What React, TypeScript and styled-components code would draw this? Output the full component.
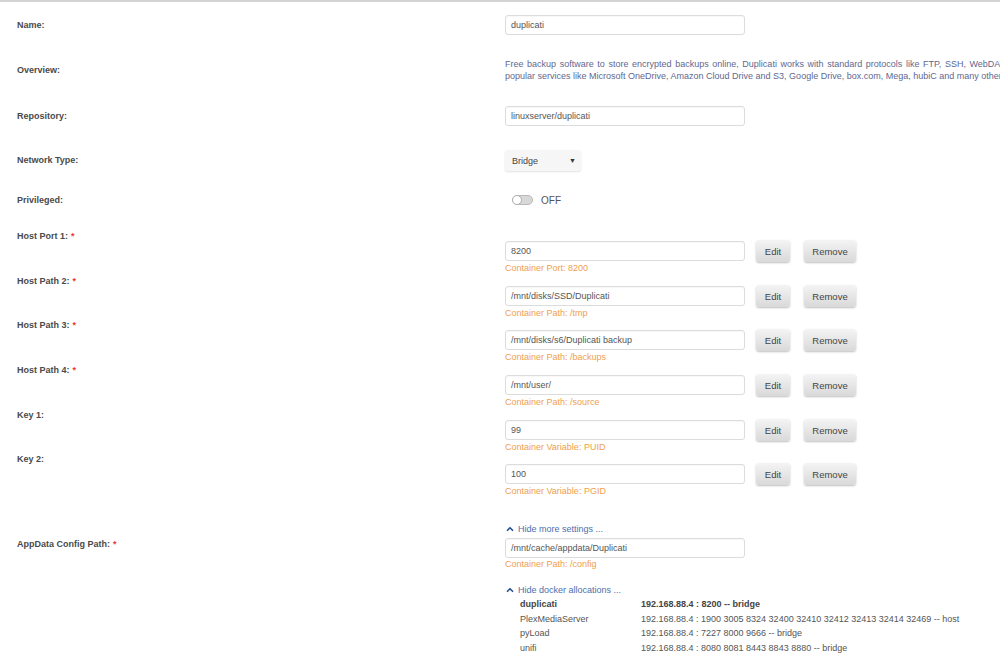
import { Fragment } from "react";
import styled, { createGlobalStyle } from "styled-components";
import { ChevronUp } from "lucide-react";

const GlobalStyle = createGlobalStyle`
  html, body {
    margin: 0;
    padding: 0;
    background: #fff;
    overflow: hidden;
  }
  body {
    font-family: "Liberation Sans", Arial, sans-serif;
  }
`

const Page = styled.div`
  width: 1000px;
  border-top: 2px solid #d3d3d3;
  padding: 13px 0 0 17px;
  box-sizing: border-box;
  overflow: hidden;
`

const Row = styled.div<{ $h: number }>`
  display: grid;
  grid-template-columns: 488px 1fr;
  height: ${p => p.$h}px;
`

const Label = styled.div<{ $lh?: number; $pt?: number }>`
  font-size: 9px;
  font-weight: bold;
  color: #4a4a4a;
  line-height: ${p => p.$lh || 14}px;
  padding-top: ${p => p.$pt || 0}px;
  white-space: nowrap;
`

const Req = styled.span`
  color: #e33;
  margin-left: 3px;
`

const Value = styled.div<{ $pt?: number }>`
  display: flex;
  flex-direction: column;
  align-items: flex-start;
  padding-top: ${p => p.$pt || 0}px;
  min-width: 0;
`

const Input = styled.div`
  width: 240px;
  height: 20px;
  box-sizing: border-box;
  border: 1px solid #dcdcdc;
  border-radius: 3px;
  background: #fff;
  box-shadow: inset 0 1px 1px rgba(0, 0, 0, 0.03);
  padding-left: 5px;
  font-size: 9px;
  line-height: 18px;
  color: #555;
  white-space: nowrap;
`

const Desc = styled.div`
  font-size: 9px;
  line-height: 12px;
  color: #5f6890;
  white-space: nowrap;
`

const DescLine = styled.div<{ $w?: number }>`
  width: ${p => (p.$w ? `${p.$w}px` : "auto")};
  text-align: ${p => (p.$w ? "justify" : "left")};
  text-align-last: ${p => (p.$w ? "justify" : "left")};
`

const Select = styled.div`
  width: 76px;
  height: 21px;
  box-sizing: border-box;
  display: flex;
  align-items: center;
  justify-content: space-between;
  padding: 0 5px 0 7px;
  background: #f6f6f6;
  border-radius: 3px;
  box-shadow: 0 1px 2px rgba(0, 0, 0, 0.12);
  font-size: 9px;
  color: #444;
`

const Caret = styled.span`
  font-size: 7px;
  color: #333;
`

const SwitchWrap = styled.div`
  display: flex;
  align-items: center;
  height: 20px;
  padding-left: 7px;
  gap: 8px;
  font-size: 10px;
  color: #555;
`

const Track = styled.div`
  position: relative;
  width: 21px;
  height: 10px;
  box-sizing: border-box;
  border-radius: 5px;
  background: #d8d8d8;
  border: 1px solid #b9b9b9;
`

const Knob = styled.div`
  position: absolute;
  left: -1px;
  top: -1px;
  width: 10px;
  height: 10px;
  box-sizing: border-box;
  border-radius: 50%;
  background: #fff;
  border: 1px solid #b0b0b0;
`

const Line = styled.div`
  display: flex;
  align-items: center;
  height: 22px;
`

const Button = styled.div<{ $w: number; $ml: number }>`
  width: ${p => p.$w}px;
  height: 22px;
  margin-left: ${p => p.$ml}px;
  box-sizing: border-box;
  display: flex;
  align-items: center;
  justify-content: center;
  border-radius: 3px;
  background: linear-gradient(#f4f4f4, #d9d9d9);
  box-shadow: 0 1px 2px rgba(0, 0, 0, 0.25);
  font-size: 9.5px;
  color: #444;
`

const Note = styled.div`
  font-size: 9px;
  line-height: 12px;
  color: #f0a04e;
  white-space: nowrap;
`

const Toggle = styled.div`
  display: flex;
  align-items: center;
  gap: 3px;
  font-size: 9px;
  line-height: 14px;
  color: #4a70ad;
  white-space: nowrap;
`

const Alloc = styled.div`
  display: grid;
  grid-template-columns: 121px auto;
  padding-left: 15px;
  font-size: 9px;
  line-height: 14.5px;
  color: #555;
  white-space: nowrap;
`

const Cell = styled.div<{ $bold?: boolean }>`
  font-weight: ${p => (p.$bold ? "bold" : "normal")};
  color: ${p => (p.$bold ? "#444" : "#555")};
`

type TMapping = {
  label: string;
  value: string;
  note: string;
  h: number;
}

const mappings: TMapping[] = [
  { label: "Host Port 1:", value: "8200", note: "Container Port: 8200", h: 45 },
  { label: "Host Path 2:", value: "/mnt/disks/SSD/Duplicati", note: "Container Path: /tmp", h: 44 },
  { label: "Host Path 3:", value: "/mnt/disks/s6/Duplicati backup", note: "Container Path: /backups", h: 45 },
  { label: "Host Path 4:", value: "/mnt/user/", note: "Container Path: /source", h: 45 },
  { label: "Key 1:", value: "99", note: "Container Variable: PUID", h: 44 },
  { label: "Key 2:", value: "100", note: "Container Variable: PGID", h: 70 },
]

const allocations = [
  { name: "duplicati", ports: "192.168.88.4 : 8200 -- bridge", bold: true },
  { name: "PlexMediaServer", ports: "192.168.88.4 : 1900 3005 8324 32400 32410 32412 32413 32414 32469 -- host" },
  { name: "pyLoad", ports: "192.168.88.4 : 7227 8000 9666 -- bridge" },
  { name: "unifi", ports: "192.168.88.4 : 8080 8081 8443 8843 8880 -- bridge" },
]

const App = () => {
  return (
    <>
      <GlobalStyle />
      <Page>
        <Row $h={43}>
          <Label $lh={20}>Name:</Label>
          <Value><Input>duplicati</Input></Value>
        </Row>
        <Row $h={48}>
          <Label $pt={5}>Overview:</Label>
          <Value>
            <Desc>
              <DescLine $w={546}>Free backup software to store encrypted backups online, Duplicati works with standard protocols like FTP, SSH, WebDAV as well as</DescLine>
              <DescLine>popular services like Microsoft OneDrive, Amazon Cloud Drive and S3, Google Drive, box.com, Mega, hubiC and many others.</DescLine>
            </Desc>
          </Value>
        </Row>
        <Row $h={44}>
          <Label $lh={20}>Repository:</Label>
          <Value><Input>linuxserver/duplicati</Input></Value>
        </Row>
        <Row $h={40}>
          <Label $lh={21}>Network Type:</Label>
          <Value>
            <Select>Bridge<Caret>▼</Caret></Select>
          </Value>
        </Row>
        <Row $h={39}>
          <Label $lh={21}>Privileged:</Label>
          <Value>
            <SwitchWrap>
              <Track><Knob /></Track>
              OFF
            </SwitchWrap>
          </Value>
        </Row>
        { mappings.map((m) => (
          <Row $h={m.h} key={m.label}>
            <Label>{m.label}{m.label.startsWith("Host") && <Req>*</Req>}</Label>
            <Value $pt={11}>
              <Line>
                <Input>{m.value}</Input>
                <Button $w={34} $ml={11}>Edit</Button>
                <Button $w={52} $ml={14}>Remove</Button>
              </Line>
              <Note>{m.note}</Note>
            </Value>
          </Row>
        )) }
        <Row $h={15}>
          <span />
          <Value>
            <Toggle><ChevronUp size={10} strokeWidth={4} color="#24528f" />Hide more settings ...</Toggle>
          </Value>
        </Row>
        <Row $h={46}>
          <Label>AppData Config Path:<Req>*</Req></Label>
          <Value $pt={1}>
            <Input>/mnt/cache/appdata/Duplicati</Input>
            <Note>Container Path: /config</Note>
          </Value>
        </Row>
        <Row $h={14}>
          <span />
          <Value>
            <Toggle><ChevronUp size={10} strokeWidth={4} color="#24528f" />Hide docker allocations ...</Toggle>
          </Value>
        </Row>
        <Row $h={58}>
          <span />
          <Alloc>
            { allocations.map((a) => (
              <Fragment key={a.name}>
                <Cell $bold={a.bold}>{a.name}</Cell>
                <Cell $bold={a.bold}>{a.ports}</Cell>
              </Fragment>
            )) }
          </Alloc>
        </Row>
      </Page>
    </>
  )
}

export default App
